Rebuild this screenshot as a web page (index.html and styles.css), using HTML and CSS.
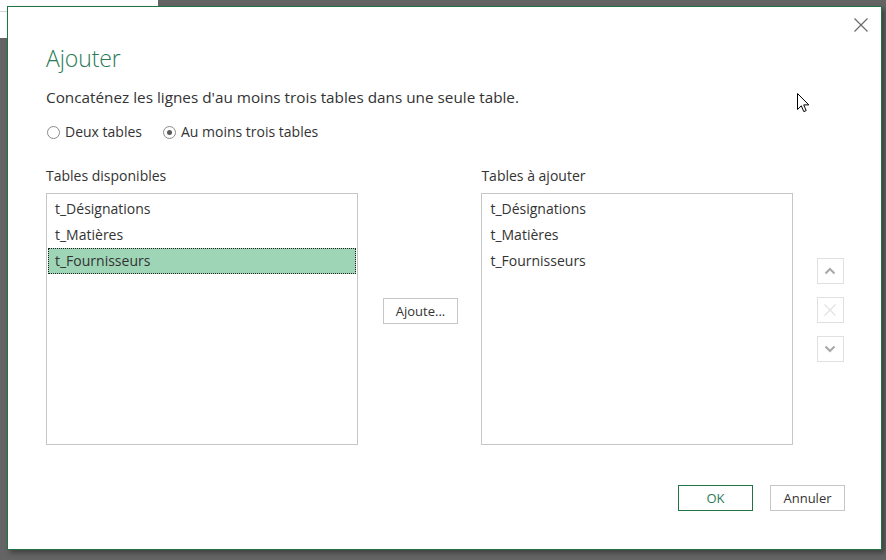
FILE: index.html
```html
<!DOCTYPE html>
<html lang="fr">
<head>
<meta charset="utf-8">
<title>Ajouter</title>
<link rel="stylesheet" href="styles.css">
</head>
<body>
<div class="app-fragment"><div class="app-line"></div></div>
<div class="dialog">
  <button class="close" aria-label="Fermer">
    <svg width="16" height="16" viewBox="0 0 16 16"><path d="M1.5 1.5 L14.5 14.5 M14.5 1.5 L1.5 14.5" stroke="#6a6a6a" stroke-width="1.2" fill="none"/></svg>
  </button>
  <h1 class="title">Ajouter</h1>
  <p class="desc">Concaténez les lignes d'au moins trois tables dans une seule table.</p>
  <div class="radios">
    <label class="radio"><span class="circle"></span>Deux tables</label>
    <label class="radio"><span class="circle checked"></span>Au moins trois tables</label>
  </div>
  <div class="lists">
    <div class="col">
      <div class="label">Tables disponibles</div>
      <ul class="listbox">
        <li class="item">t_Désignations</li>
        <li class="item">t_Matières</li>
        <li class="item selected">t_Fournisseurs</li>
      </ul>
    </div>
    <div class="middle">
      <button class="btn add">Ajoute...</button>
    </div>
    <div class="col">
      <div class="label">Tables à ajouter</div>
      <ul class="listbox">
        <li class="item">t_Désignations</li>
        <li class="item">t_Matières</li>
        <li class="item">t_Fournisseurs</li>
      </ul>
    </div>
    <div class="side">
      <button class="sbtn" aria-label="Monter"><svg width="12" height="8" viewBox="0 0 12 8"><path d="M1.5 6.5 L6 2 L10.5 6.5" stroke="#a8a8a8" stroke-width="2" fill="none"/></svg></button>
      <button class="sbtn" aria-label="Supprimer"><svg width="14" height="14" viewBox="0 0 14 14"><path d="M1.5 1.5 L12.5 12.5 M12.5 1.5 L1.5 12.5" stroke="#e2e2e2" stroke-width="1.2" fill="none"/></svg></button>
      <button class="sbtn" aria-label="Descendre"><svg width="12" height="8" viewBox="0 0 12 8"><path d="M1.5 1.5 L6 6 L10.5 1.5" stroke="#a8a8a8" stroke-width="2" fill="none"/></svg></button>
    </div>
  </div>
  <div class="footer">
    <button class="btn ok">OK</button>
    <button class="btn cancel">Annuler</button>
  </div>
</div>
<svg class="cursor" width="13" height="20" viewBox="0 0 13 20"><path d="M0.5 0.5 L0.5 16.5 L4.3 12.8 L6.8 18.6 L9.2 17.6 L6.7 11.9 L11.8 11.9 Z" fill="#fff" stroke="#000" stroke-width="1" stroke-linejoin="miter"/></svg>
</body>
</html>
```
FILE: styles.css
```css
html, body {
  margin: 0;
  padding: 0;
}
body {
  width: 886px;
  height: 560px;
  background: #646464;
  position: relative;
  overflow: hidden;
  font-family: "Open Sans", "Liberation Sans", sans-serif;
  color: #333;
}
.app-fragment {
  position: absolute;
  left: 0;
  top: 0;
  width: 158px;
  height: 38px;
  background: #fff;
}
.app-line {
  margin-top: 11px;
  height: 1px;
  background: #d4d4d4;
}
.dialog {
  position: absolute;
  left: 7px;
  top: 6px;
  width: 875px;
  height: 544px;
  box-sizing: border-box;
  background: #fff;
  border: 1px solid #217346;
  box-shadow: 3px 3px 5px rgba(0,0,0,0.35);
  padding: 0 37px 0 38px;
  display: flex;
  flex-direction: column;
}
.close {
  position: absolute;
  right: 11px;
  top: 9px;
  width: 18px;
  height: 18px;
  padding: 0;
  border: 0;
  background: transparent;
  display: flex;
  align-items: center;
  justify-content: center;
}
.title {
  margin: 35px 0 0;
  font-weight: 300;
  font-size: 23px;
  line-height: 32px;
  color: #2b7a57;
  letter-spacing: -0.1px;
}
.desc {
  margin: 12px 0 0;
  font-size: 15.3px;
  line-height: 22px;
  color: #333;
}
.radios {
  display: flex;
  gap: 20px;
  margin-top: 14px;
  font-size: 14px;
  line-height: 20px;
}
.radio {
  display: flex;
  align-items: center;
}
.circle {
  width: 11px;
  height: 11px;
  border: 1px solid #8a8a8a;
  border-radius: 50%;
  margin: 0 5px 0 1px;
  position: relative;
  box-sizing: content-box;
}
.circle.checked::after {
  content: "";
  position: absolute;
  left: 3px;
  top: 3px;
  width: 5px;
  height: 5px;
  border-radius: 50%;
  background: #5a5a5a;
}
.lists {
  display: flex;
  margin-top: 24px;
}
.col {
  width: 312px;
  display: flex;
  flex-direction: column;
}
.label {
  font-size: 14px;
  line-height: 20px;
  height: 27px;
}
.listbox {
  list-style: none;
  margin: 0;
  padding: 2px 0 0;
  height: 252px;
  box-sizing: border-box;
  border: 1px solid #c6c6c6;
  font-size: 14px;
}
.item {
  height: 26px;
  line-height: 26px;
  margin: 0 1px;
  padding-left: 7px;
  box-sizing: border-box;
}
.item.selected {
  background: #9fd5b7;
  outline: 1px dotted #222;
  outline-offset: -1px;
}
.middle {
  width: 124px;
  display: flex;
  justify-content: center;
  align-items: flex-start;
  padding-top: 132px;
  box-sizing: border-box;
}
.btn {
  font-family: "Open Sans", "Liberation Sans", sans-serif;
  font-size: 13px;
  color: #333;
  background: #fff;
  border: 1px solid #c6c6c6;
  height: 26px;
  width: 75px;
  padding: 0;
}
.add {
  margin-left: 2px;
}
.side {
  margin-left: 24px;
  padding-top: 92px;
  display: flex;
  flex-direction: column;
  gap: 13px;
}
.sbtn {
  width: 27px;
  height: 26px;
  padding: 0;
  border: 1px solid #e0e0e0;
  background: #fff;
  display: flex;
  align-items: center;
  justify-content: center;
}
.footer {
  display: flex;
  justify-content: flex-end;
  gap: 17px;
  margin: 40px -1px 0 0;
}
.ok {
  border-color: #217346;
  color: #2b7a57;
}
.cursor {
  position: absolute;
  left: 797px;
  top: 93px;
}
```
